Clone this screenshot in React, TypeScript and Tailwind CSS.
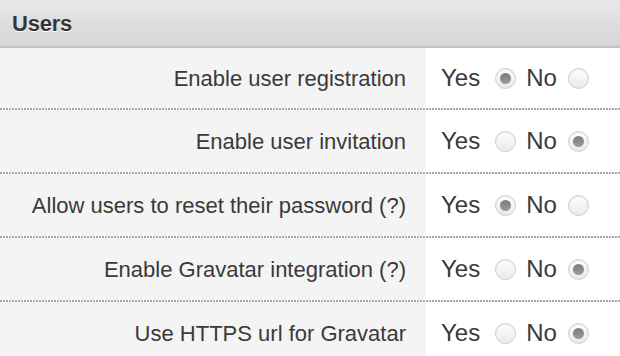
import React from "react";

const rows: { label: string; yes: boolean }[] = [
  { label: "Enable user registration", yes: true },
  { label: "Enable user invitation", yes: false },
  { label: "Allow users to reset their password (?)", yes: true },
  { label: "Enable Gravatar integration (?)", yes: false },
  { label: "Use HTTPS url for Gravatar", yes: false },
];

function Radio({ checked }: { checked: boolean }) {
  return (
    <span className="flex items-center justify-center w-[21px] h-[21px] rounded-full border border-[#cdcdcd] bg-gradient-to-b from-[#ffffff] to-[#e9e9e9] shadow-[inset_0_1px_1px_rgba(0,0,0,0.08)]">
      {checked && (
        <span className="block w-[11px] h-[11px] rounded-full bg-gradient-to-b from-[#7a7a7a] to-[#9c9c9c]" />
      )}
    </span>
  );
}

function Dots() {
  return (
    <div className="h-[2px] w-full bg-[repeating-linear-gradient(90deg,#a8a8a8_0px,#a8a8a8_2px,transparent_2px,transparent_3px)]" />
  );
}

export default function App() {
  return (
    <div
      className="w-[620px] h-[356px] overflow-hidden bg-white text-[#3a3a3a]"
      style={{ fontFamily: '"Liberation Sans", Arial, sans-serif' }}
    >
      <div className="h-[46px] bg-gradient-to-b from-[#e8e8e8] to-[#d5d5d5] flex items-center px-[12px]">
        <span className="text-[22px] font-bold text-[#363636] tracking-[-0.2px] [text-shadow:0_1px_0_#ffffff]">
          Users
        </span>
      </div>
      <div className="h-[2px] bg-[#c3c3c3]" />
      {rows.map((r, i) => (
        <div key={r.label}>
          <div className={`flex ${i === 0 ? "h-[60px]" : "h-[62px]"}`}>
            <div className="w-[426px] bg-[#f4f4f4] flex items-center justify-end pr-[20px] text-[22px]">
              {r.label}
            </div>
            <div className="flex-1 flex items-center pl-[15px] text-[24px]">
              <span className="leading-none">Yes</span>
              <span className="ml-[15px]"><Radio checked={r.yes} /></span>
              <span className="ml-[10px] leading-none">No</span>
              <span className="ml-[11px]"><Radio checked={!r.yes} /></span>
            </div>
          </div>
          {i < rows.length - 1 && <Dots />}
        </div>
      ))}
    </div>
  );
}
